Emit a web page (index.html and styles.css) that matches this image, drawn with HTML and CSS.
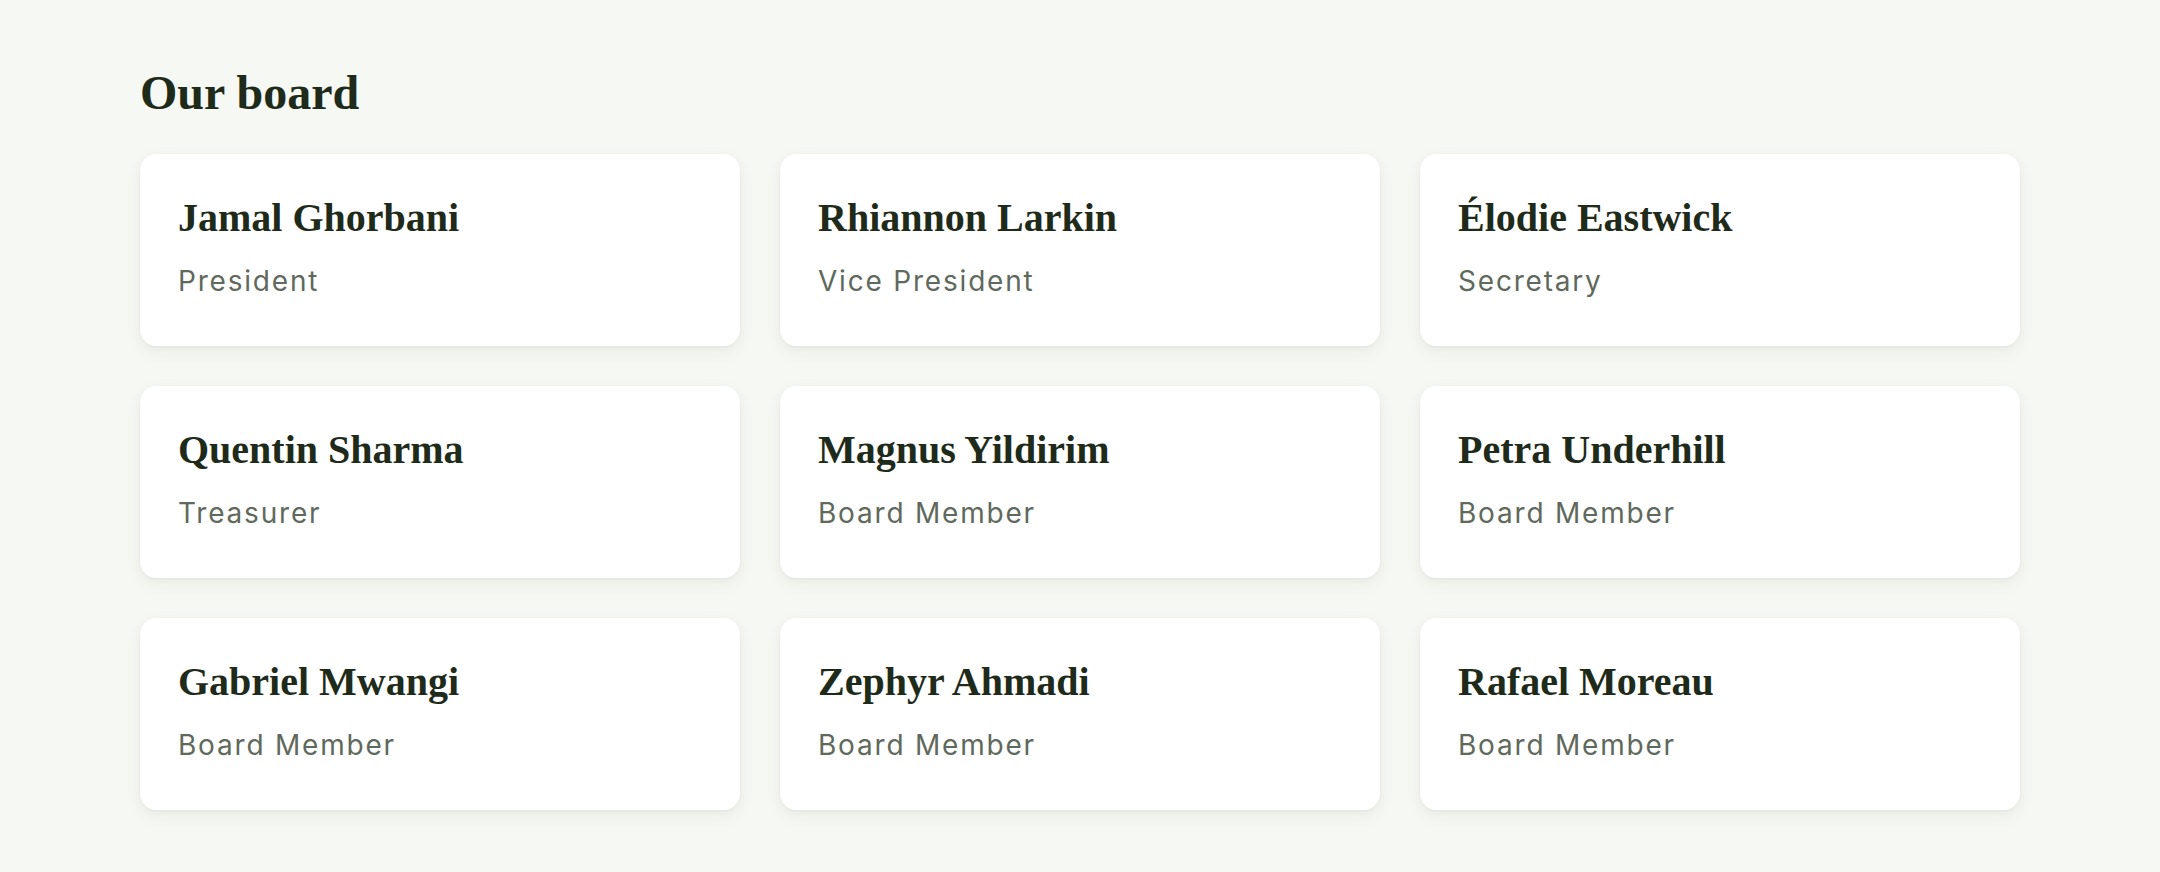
FILE: index.html
```html
<!DOCTYPE html>
<html lang="en">
<head>
<meta charset="utf-8">
<title>Our board</title>
<link rel="stylesheet" href="styles.css">
</head>
<body>
<main class="page">
  <h2 class="title">Our board</h2>
  <div class="grid">
    <div class="card"><h3 class="name">Jamal Ghorbani</h3><p class="role">President</p></div>
    <div class="card"><h3 class="name">Rhiannon Larkin</h3><p class="role">Vice President</p></div>
    <div class="card"><h3 class="name">Élodie Eastwick</h3><p class="role">Secretary</p></div>
    <div class="card"><h3 class="name">Quentin Sharma</h3><p class="role">Treasurer</p></div>
    <div class="card"><h3 class="name">Magnus Yildirim</h3><p class="role">Board Member</p></div>
    <div class="card"><h3 class="name">Petra Underhill</h3><p class="role">Board Member</p></div>
    <div class="card"><h3 class="name">Gabriel Mwangi</h3><p class="role">Board Member</p></div>
    <div class="card"><h3 class="name">Zephyr Ahmadi</h3><p class="role">Board Member</p></div>
    <div class="card"><h3 class="name">Rafael Moreau</h3><p class="role">Board Member</p></div>
  </div>
</main>
</body>
</html>
```
FILE: styles.css
```css
html, body {
  margin: 0;
  padding: 0;
  background: #f6f8f3;
}
.page {
  padding: 64px 140px 40px;
}
.title {
  margin: 0 0 32px;
  font-family: "Liberation Serif", serif;
  font-weight: 700;
  font-size: 48px;
  line-height: 1.2;
  color: #1f2b1a;
}
.grid {
  display: grid;
  grid-template-columns: repeat(3, 1fr);
  gap: 40px;
}
.card {
  background: #ffffff;
  border-radius: 16px;
  padding: 40px 38px 44px;
  box-shadow: 0 5px 16px rgba(40, 50, 30, 0.07), 0 1px 3px rgba(40, 50, 30, 0.05);
}
.name {
  margin: 0;
  font-family: "Liberation Serif", serif;
  font-weight: 700;
  font-size: 40px;
  line-height: 48px;
  color: #1f2b1a;
}
.role {
  margin: 18px 0 0;
  font-family: Inter, "Liberation Sans", sans-serif;
  font-weight: 400;
  font-size: 28px;
  line-height: 42px;
  letter-spacing: 1.8px;
  color: #5f695d;
}
```
